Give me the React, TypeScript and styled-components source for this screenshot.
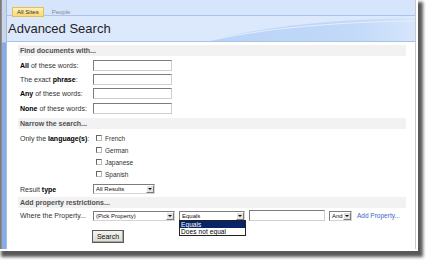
import React from "react";
import styled, { createGlobalStyle } from "styled-components";

const Global = createGlobalStyle`
  html, body { margin: 0; padding: 0; background: #fff; }
  body { font-family: "Liberation Sans", Arial, sans-serif; }
  * { box-sizing: border-box; }
`;

const Canvas = styled.div`
  width: 429px;
  height: 260px;
  background: #fff;
  overflow: hidden;
`;

const Shot = styled.div`
  width: 416px;
  height: 249px;
  display: flex;
  background: #fff;
  box-shadow: 0 0 0 2px #fff, 4px 5px 3px 3px rgba(0, 0, 0, 0.65);
`;

const EdgeDark = styled.div`
  width: 2px;
  background: linear-gradient(90deg, #6e6e6e, #9a9a9a);
`;

const EdgeBlue = styled.div`
  width: 5px;
  background: linear-gradient(180deg, #c7d6ea 0px, #c7d6ea 42px, #86ade6 43px, #86ade6 100%);
  border-right: 1px solid #a7bcd8;
`;

const Main = styled.div`
  flex: 1;
  display: flex;
  flex-direction: column;
  border-right: 1px solid #c9c9c9;
`;

const Header = styled.div`
  position: relative;
  height: 42px;
  display: flex;
  flex-direction: column;
  overflow: hidden;
`;

const TabBar = styled.div`
  height: 16px;
  padding: 7px 0 0 5px;
  display: flex;
  align-items: flex-start;
  gap: 3px;
  background: #d6e5fb;
  border-bottom: 1px solid #a9c4ec;
`;

const Tab = styled.div<{ $active?: boolean }>`
  height: 10px;
  padding: 0 4px;
  font-size: 6px;
  line-height: 9px;
  color: ${(p) => (p.$active ? "#333" : "#8a8a8a")};
  background: ${(p) => (p.$active ? "linear-gradient(180deg,#fff0b5,#fbd873)" : "transparent")};
  border: 1px solid ${(p) => (p.$active ? "#e3be5c" : "transparent")};
  position: relative;
  z-index: 1;
`;

const TitleBand = styled.div`
  position: relative;
  height: 26px;
  display: flex;
  align-items: center;
  padding: 0 0 1px 1px;
  background: #dce9fc;
  border-bottom: 1px solid #a8c3ea;
`;

const Wave = styled.svg`
  position: absolute;
  left: 0;
  top: 0;
  width: 100%;
  height: 100%;
`;

const Title = styled.h1`
  position: relative;
  margin: 0;
  font-family: "Liberation Sans", Arial, sans-serif;
  font-weight: normal;
  font-size: 13px;
  color: #1f1f1f;
`;

const Content = styled.div`
  flex: 1;
  padding: 3px 9px 0 11px;
  display: flex;
  flex-direction: column;
  font-size: 7px;
  color: #333;
`;

const SectionBar = styled.div<{ $mt?: number }>`
  height: 11px;
  margin-top: ${(p) => p.$mt ?? 0}px;
  padding-left: 2px;
  background: #f2f2f2;
  font-weight: bold;
  font-size: 7px;
  line-height: 11px;
  color: #505050;
`;

const Row = styled.div<{ $h: number; $mt?: number }>`
  height: ${(p) => p.$h}px;
  margin-top: ${(p) => p.$mt ?? 0}px;
  padding-left: 2px;
  display: grid;
  grid-template-columns: 73px auto;
  align-items: center;
`;

const Label = styled.div`
  font-size: 7px;
  color: #333;
  white-space: nowrap;
  b { color: #000; }
`;

const Field = styled.div`
  display: flex;
  align-items: center;
  gap: 4px;
`;

const TextInput = styled.div<{ $w: number }>`
  width: ${(p) => p.$w}px;
  height: 11px;
  background: #fff;
  border: 1px solid;
  border-color: #7c7c7c #cfcfcf #cfcfcf #7c7c7c;
`;

const CheckLine = styled.label`
  display: flex;
  align-items: center;
  gap: 3px;
  margin-left: 3px;
  font-size: 6.5px;
  color: #333;
`;

const Box = styled.span`
  width: 6px;
  height: 6px;
  background: #fff;
  border: 1px solid;
  border-color: #666 #bbb #bbb #666;
`;

const Select = styled.div<{ $w: number }>`
  position: relative;
  width: ${(p) => p.$w}px;
  height: 10px;
  display: flex;
  align-items: center;
  justify-content: space-between;
  background: #fff;
  border: 1px solid;
  border-color: #7c7c7c #d4d4d4 #d4d4d4 #7c7c7c;
  padding-left: 2px;
  font-size: 6px;
  color: #111;
  white-space: nowrap;
`;

const Arrow = styled.span`
  width: 8px;
  height: 8px;
  display: flex;
  align-items: center;
  justify-content: center;
  background: #e4e2dc;
  border: 1px solid;
  border-color: #fff #7a7a7a #7a7a7a #fff;
  &::after {
    content: "";
    border-left: 2px solid transparent;
    border-right: 2px solid transparent;
    border-top: 2px solid #111;
  }
`;

const DropList = styled.div`
  position: absolute;
  left: -1px;
  top: 100%;
  width: 67px;
  background: #fff;
  border: 1px solid #222;
  z-index: 2;
`;

const DropItem = styled.div<{ $sel?: boolean }>`
  height: 7px;
  padding-left: 1px;
  font-size: 6.5px;
  line-height: 7px;
  letter-spacing: 0.1px;
  color: ${(p) => (p.$sel ? "#fff" : "#000")};
  background: ${(p) => (p.$sel ? "#0a246a" : "#fff")};
`;

const Link = styled.a`
  margin-left: 1px;
  font-size: 6.5px;
  color: #3c64c8;
  text-decoration: none;
`;

const ButtonRow = styled.div`
  margin-top: 9px;
  padding-left: 74px;
`;

const Button = styled.button`
  width: 32px;
  height: 13px;
  padding: 0;
  font-family: "Liberation Sans", Arial, sans-serif;
  font-size: 7px;
  color: #111;
  background: linear-gradient(180deg, #f4f3ee, #dcdad2);
  border: 1px solid #5a5a5a;
  box-shadow: inset -1px -1px 0 #a9a79f;
`;

export default function App() {
  const langs = ["French", "German", "Japanese", "Spanish"];
  return (
    <Canvas>
      <Global />
      <Shot>
        <EdgeDark />
        <EdgeBlue />
        <Main>
          <Header>
            <TabBar>
              <Tab $active>All Sites</Tab>
              <Tab>People</Tab>
            </TabBar>
            <TitleBand>
              <Wave viewBox="0 0 408 25" preserveAspectRatio="none">
                <defs>
                  <linearGradient id="wg" x1="0" x2="1" y1="0" y2="0">
                    <stop offset="0" stopColor="#bad4f6" />
                    <stop offset="0.7" stopColor="#c2d9f8" />
                    <stop offset="1" stopColor="#d6e6fc" />
                  </linearGradient>
                </defs>
                <path d="M205 24 C 260 10, 330 3, 408 2 L408 25 L205 25 Z" fill="url(#wg)" />
                <path d="M205 24 C 260 12, 330 6, 408 5" fill="none" stroke="#e4eefc" strokeWidth="1" />
              </Wave>
              <Title>Advanced Search</Title>
            </TitleBand>
          </Header>
          <Content>
            <SectionBar>Find documents with...</SectionBar>
            <Row $h={11} $mt={4}>
              <Label><b>All</b> of these words:</Label>
              <TextInput $w={79} />
            </Row>
            <Row $h={11} $mt={3}>
              <Label>The exact <b>phrase</b>:</Label>
              <TextInput $w={79} />
            </Row>
            <Row $h={11} $mt={3}>
              <Label><b>Any</b> of these words:</Label>
              <TextInput $w={79} />
            </Row>
            <Row $h={11} $mt={4}>
              <Label><b>None</b> of these words:</Label>
              <TextInput $w={79} />
            </Row>
            <SectionBar $mt={4}>Narrow the search...</SectionBar>
            {langs.map((l, i) => (
              <Row key={l} $h={12} $mt={i === 0 ? 3 : 0}>
                <Label>{i === 0 ? <>Only the <b>language(s)</b>:</> : null}</Label>
                <CheckLine>
                  <Box />
                  {l}
                </CheckLine>
              </Row>
            ))}
            <Row $h={12} $mt={3}>
              <Label>Result <b>type</b></Label>
              <Select $w={62}>
                All Results
                <Arrow />
              </Select>
            </Row>
            <SectionBar $mt={2}>Add property restrictions...</SectionBar>
            <Row $h={11} $mt={2}>
              <Label>Where the Property...</Label>
              <Field>
                <Select $w={82}>
                  (Pick Property)
                  <Arrow />
                </Select>
                <Select $w={66}>
                  Equals
                  <Arrow />
                  <DropList>
                    <DropItem $sel>Equals</DropItem>
                    <DropItem>Does not equal</DropItem>
                  </DropList>
                </Select>
                <TextInput $w={76} />
                <Select $w={23}>
                  And
                  <Arrow />
                </Select>
                <Link href="#">Add Property...</Link>
              </Field>
            </Row>
            <ButtonRow>
              <Button>Search</Button>
            </ButtonRow>
          </Content>
        </Main>
      </Shot>
    </Canvas>
  );
}
